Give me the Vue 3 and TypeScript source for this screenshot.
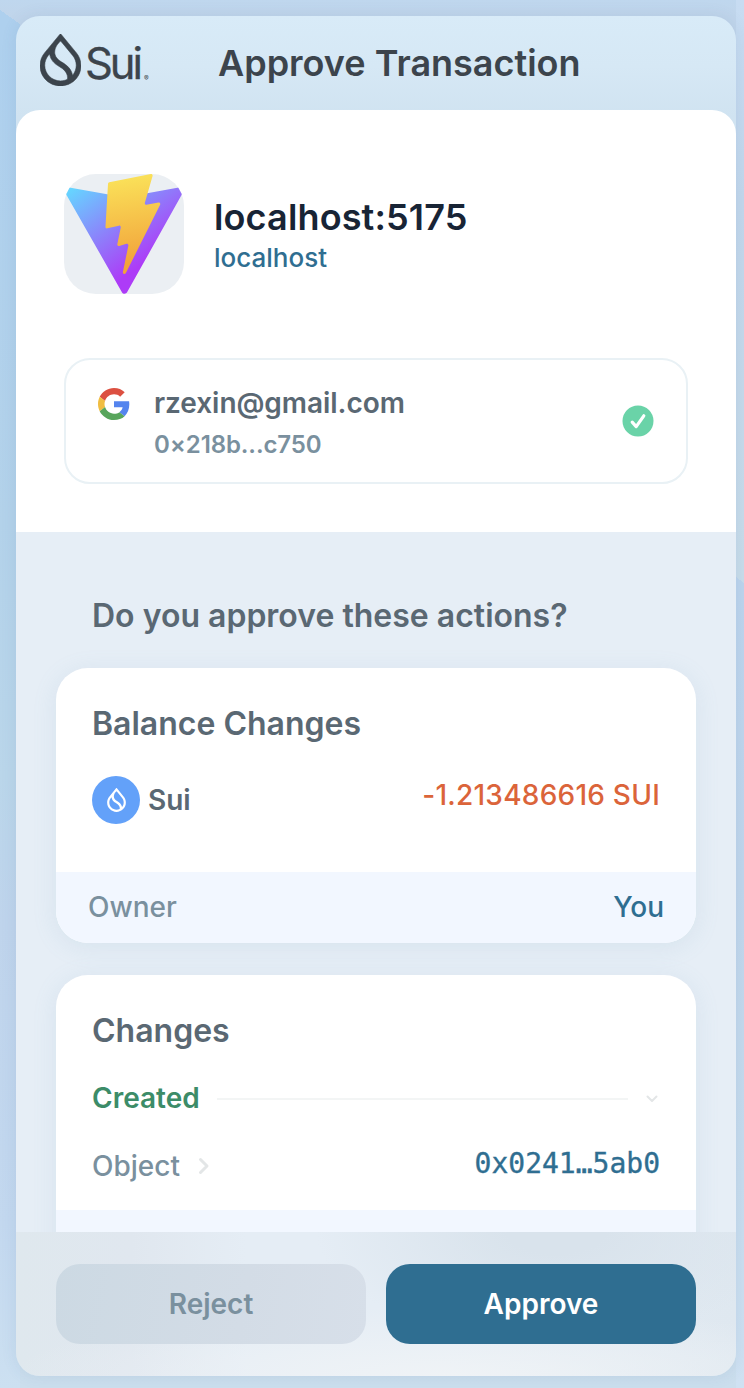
<script setup lang="ts">
const dropPath =
  'M240.057 159.914C255.698 179.553 265.052 204.39 265.052 231.407C265.052 258.424 255.414 284.019 239.362 303.768L237.971 305.475L237.608 303.31C237.292 301.477 236.929 299.613 236.502 297.749C228.46 262.421 202.265 232.134 159.148 207.597C130.029 191.071 113.361 171.195 108.985 148.586C106.157 133.972 108.258 119.294 112.318 106.717C116.379 94.1569 122.414 83.6187 127.549 77.2831L144.328 56.7754C147.267 53.1731 152.781 53.1731 155.719 56.7754L240.073 159.914H240.057ZM266.584 139.422L154.155 1.96703C152.007 -0.655678 147.993 -0.655678 145.845 1.96703L33.4316 139.422L33.0683 139.881C12.3868 165.555 0 198.181 0 233.698C0 316.408 67.1635 383.461 150 383.461C232.837 383.461 300 316.408 300 233.698C300 198.181 287.613 165.555 266.932 139.896L266.568 139.438L266.584 139.422ZM60.3381 159.472L70.3866 147.164L70.6868 149.439C70.9237 151.24 71.2239 153.041 71.5715 154.858C78.0809 189.001 101.322 217.456 140.173 239.496C173.952 258.724 193.622 280.828 199.278 305.064C201.648 315.176 202.059 325.129 201.032 333.835L200.969 334.372L200.479 334.609C185.233 342.05 168.09 346.237 149.984 346.237C86.4546 346.237 34.9484 294.826 34.9484 231.391C34.9484 204.153 44.4439 179.142 60.3065 159.44L60.3381 159.472Z'

interface Site { title: string; host: string }
interface Account { email: string; address: string }

const site: Site = { title: 'localhost:5175', host: 'localhost' }
const account: Account = { email: 'rzexin@gmail.com', address: '0×218b...c750' }
</script>

<template>
  <main class="screen">
    <div class="wallet">
      <header class="topbar">
        <div class="brand">
          <svg class="brand-drop" viewBox="0 0 300 384" preserveAspectRatio="none"><path :d="dropPath" fill="currentColor" stroke="currentColor" stroke-width="4" fill-rule="evenodd" /></svg>
          <span class="brand-name">Sui</span>
          <span class="brand-mark">®</span>
        </div>
        <h1 class="title">Approve Transaction</h1>
      </header>

      <section class="origin">
        <div class="site">
          <div class="favicon">
            <svg viewBox="0 0 256 257" width="120" height="120">
              <defs>
                <linearGradient id="tri" x1="-.828%" x2="57.636%" y1="7.652%" y2="78.411%">
                  <stop offset="0%" stop-color="#66d4ff" />
                  <stop offset="100%" stop-color="#ad3bf7" />
                </linearGradient>
                <linearGradient id="bolt" x1="43.376%" x2="50.316%" y1="2.242%" y2="89.03%">
                  <stop offset="0%" stop-color="#fae159" />
                  <stop offset="100%" stop-color="#f2a33b" />
                </linearGradient>
              </defs>
              <path fill="url(#tri)" d="M255.153 37.938L134.897 252.976c-2.483 4.44-8.862 4.466-11.382.048L.875 37.958c-2.746-4.814 1.371-10.646 6.827-9.67l120.385 21.517a6.537 6.537 0 0 0 2.322-.004l117.867-21.483c5.438-.991 9.574 4.796 6.877 9.62Z" />
              <path fill="url(#bolt)" d="M185.432.063L96.44 17.501a3.268 3.268 0 0 0-2.634 3.014l-5.474 92.456a3.268 3.268 0 0 0 3.997 3.378l24.777-5.718c2.318-.535 4.413 1.507 3.936 3.838l-7.361 36.047c-.495 2.426 1.782 4.5 4.151 3.78l15.304-4.649c2.372-.72 4.652 1.36 4.15 3.788l-11.698 56.621c-.732 3.542 3.979 5.473 5.943 2.437l1.313-2.028l72.516-144.72c1.215-2.423-.88-5.186-3.54-4.672l-25.505 4.922c-2.396.462-4.435-1.77-3.759-4.114l16.646-57.705c.677-2.35-1.37-4.583-3.769-4.113Z" />
            </svg>
          </div>
          <div class="site-text">
            <div class="site-title">{{ site.title }}</div>
            <div class="site-host">{{ site.host }}</div>
          </div>
        </div>

        <div class="account">
          <svg class="google" viewBox="0 0 48 48">
            <path fill="#dc5041" d="M24 9.5c3.54 0 6.71 1.22 9.21 3.6l6.85-6.85C35.9 2.38 30.47 0 24 0 14.62 0 6.51 5.38 2.56 13.22l7.98 6.19C12.43 13.72 17.74 9.5 24 9.5z" />
            <path fill="#5484ee" d="M46.98 24.55c0-1.57-.15-3.09-.38-4.55H24v9.02h12.94c-.58 2.96-2.26 5.48-4.78 7.18l7.73 6c4.51-4.18 7.09-10.36 7.09-17.65z" />
            <path fill="#f0bd42" d="M10.53 28.59c-.48-1.45-.76-2.99-.76-4.59s.27-3.14.76-4.59l-7.98-6.19C.92 16.46 0 20.12 0 24c0 3.88.92 7.54 2.56 10.78l7.97-6.19z" />
            <path fill="#58a55c" d="M24 48c6.48 0 11.93-2.13 15.89-5.81l-7.73-6c-2.15 1.45-4.92 2.3-8.16 2.3-6.26 0-11.57-4.22-13.47-9.91l-7.98 6.19C6.51 42.62 14.62 48 24 48z" />
          </svg>
          <div class="account-text">
            <div class="email">{{ account.email }}</div>
            <div class="address">{{ account.address }}</div>
          </div>
          <svg class="check" viewBox="0 0 32 32">
            <circle cx="16" cy="16" r="15.5" fill="#6ad3a8" />
            <path d="M10.2 17.2 14.2 21.6 21.8 10.8" fill="none" stroke="#fff" stroke-width="3.2" stroke-linecap="round" stroke-linejoin="round" />
          </svg>
        </div>
      </section>

      <section class="actions">
        <h2 class="question">Do you approve these actions?</h2>

        <article class="card balance">
          <div class="card-main">
            <h3 class="card-title">Balance Changes</h3>
            <div class="coin-row">
              <div class="coin">
                <span class="coin-icon">
                  <svg viewBox="0 0 300 384"><path :d="dropPath" fill="#fff" fill-rule="evenodd" /></svg>
                </span>
                <span class="coin-name">Sui</span>
              </div>
              <span class="amount">-1.213486616 SUI</span>
            </div>
          </div>
          <div class="owner-row">
            <span class="owner-label">Owner</span>
            <span class="owner-value">You</span>
          </div>
        </article>

        <article class="card changes">
          <div class="card-main">
            <h3 class="card-title">Changes</h3>
            <div class="created-row">
              <span class="created">Created</span>
              <span class="rule"></span>
              <svg class="chevron-down" viewBox="0 0 12 8"><path d="M1.5 1.5 6 6 10.5 1.5" /></svg>
            </div>
            <div class="object-row">
              <span class="object-label">Object</span>
              <svg class="chevron-right" viewBox="0 0 12 18"><path d="M2.5 2.5 9 9 2.5 15.5" /></svg>
              <span class="object-id">0x0241…5ab0</span>
            </div>
          </div>
          <div class="owner-row"></div>
        </article>
      </section>

      <footer class="footer">
        <button class="btn reject" type="button">Reject</button>
        <button class="btn approve" type="button">Approve</button>
      </footer>
    </div>
  </main>
</template>

<style>
body {
  margin: 0;
}
</style>

<style scoped>
* {
  box-sizing: border-box;
}
.screen {
  width: 744px;
  height: 1388px;
  padding: 16px 8px 12px 16px;
  font-family: Inter, "Liberation Sans", sans-serif;
  background:
    linear-gradient(to bottom left, transparent 50%, #aed0ee 50%) 0 10px / 20px 14px no-repeat,
    linear-gradient(180deg, #aed0ee 0, #b3d2ea 500px, #bad6ea 750px, #bfd4ec 900px, #c3d8ef 1200px, #cce0f1 1364px) 0 24px / 20px 1364px no-repeat,
    linear-gradient(to bottom left, transparent 50%, #bcd4ed 50%) 736px 577px / 8px 6px no-repeat,
    linear-gradient(180deg, #bcd4ed 0, #c0d6ec 300px, #c7dcee 600px, #cfe1f2 805px) 736px 583px / 8px 805px no-repeat,
    linear-gradient(180deg, #c7dcf2 0, #c2d7ec 200px, #c8dcea 583px) 736px 0 / 8px 583px no-repeat,
    linear-gradient(180deg, #bfd7ee 0, #c0d5eb 16px, #c0d5eb 50%, #cbdeed 100%);
}
.wallet {
  display: flex;
  flex-direction: column;
  height: 1360px;
  border-radius: 24px;
  overflow: hidden;
  background: linear-gradient(180deg, #d8ebf8 0, #d6e8f5 50px, #d0e3f1 100px, #d0e3f1 130px);
  box-shadow: 0 0 16px rgba(60, 100, 150, 0.1);
}
.topbar {
  display: flex;
  height: 94px;
  flex: none;
  color: #3c444c;
}
.brand {
  display: flex;
  width: 202px;
  padding: 18px 0 0 24px;
}
.brand-drop {
  width: 41px;
  height: 52px;
}
.brand-name {
  margin: 3px 0 0 4px;
  font-size: 43.5px;
  line-height: 52px;
  font-weight: 400;
  letter-spacing: -3.1px;
  -webkit-text-stroke: 0.3px currentColor;
}
.brand-mark {
  margin: 40px 0 0 4px;
  font-size: 7px;
  line-height: 10px;
  font-weight: 500;
}
.title {
  margin: 0;
  padding-top: 25px;
  font-size: 36px;
  line-height: 44px;
  font-weight: 600;
  white-space: nowrap;
}
.origin {
  flex: none;
  height: 422px;
  padding: 64px 48px 0;
  border-radius: 24px 24px 0 0;
  background: #fff;
}
.site {
  display: flex;
}
.favicon {
  width: 120px;
  height: 120px;
  border-radius: 32px;
  overflow: hidden;
  background: #ebeff3;
}
.favicon svg {
  display: block;
}
.site-text {
  padding: 23px 0 0 30px;
}
.site-title {
  color: #182435;
  font-size: 36px;
  line-height: 40px;
  font-weight: 600;
  letter-spacing: 0.14px;
}
.site-host {
  margin-top: 5px;
  color: #2f6e91;
  font-size: 26px;
  line-height: 32px;
  font-weight: 500;
}
.account {
  display: flex;
  height: 126px;
  margin-top: 64px;
  padding: 28px 32px 0;
  border: 2px solid #e9f1f5;
  border-radius: 26px;
}
.google {
  width: 32px;
  height: 32px;
}
.account-text {
  flex: 1;
  margin-left: 24px;
}
.email {
  margin-top: -2px;
  color: #5a6873;
  font-size: 28px;
  line-height: 34px;
  font-weight: 600;
  letter-spacing: -0.06px;
}
.address {
  margin-top: 9px;
  color: #7a909e;
  font-size: 24px;
  line-height: 32px;
  font-weight: 600;
  letter-spacing: -0.1px;
}
.check {
  width: 32px;
  height: 32px;
  margin-top: 17px;
}
.actions {
  flex: 1;
  min-height: 0;
  overflow: hidden;
  padding: 63px 40px 0;
  background: #e6eef6;
}
.question {
  margin: 0 0 31px 36px;
  color: #5a6873;
  font-size: 32px;
  line-height: 42px;
  font-weight: 600;
}
.card {
  border-radius: 32px;
  overflow: hidden;
  background: #fff;
  box-shadow: 0 4px 24px rgba(120, 160, 190, 0.14);
}
.balance {
  height: 275px;
  margin-bottom: 32px;
}
.card-main {
  height: 204px;
  padding: 35px 36px 0;
}
.changes .card-main {
  height: 235px;
}
.card-title {
  margin: 0;
  color: #5a6873;
  font-size: 32px;
  line-height: 42px;
  font-weight: 600;
}
.coin-row {
  display: flex;
  justify-content: space-between;
  margin-top: 31px;
}
.coin {
  display: flex;
  align-items: center;
  gap: 8px;
  height: 48px;
}
.coin-icon {
  display: flex;
  align-items: center;
  justify-content: center;
  width: 48px;
  height: 48px;
  border-radius: 50%;
  background: #63a1f9;
}
.coin-icon svg {
  width: 19px;
  height: 24px;
}
.coin-name {
  color: #5a6873;
  font-size: 28px;
  font-weight: 600;
}
.amount {
  margin-top: 2px;
  color: #db643a;
  font-size: 28px;
  line-height: 34px;
  font-weight: 500;
  letter-spacing: 0.24px;
}
.owner-row {
  display: flex;
  justify-content: space-between;
  height: 71px;
  padding: 18px 32px 0;
  background: #f2f7ff;
  font-size: 28px;
  line-height: 34px;
  font-weight: 500;
}
.owner-label {
  color: #7a909e;
}
.owner-value {
  color: #2f6e91;
}
.created-row {
  display: flex;
  align-items: center;
  height: 36px;
  margin-top: 28px;
}
.created {
  color: #3c8c68;
  font-size: 28px;
  line-height: 34px;
  font-weight: 600;
}
.rule {
  flex: 1;
  height: 2px;
  margin: 2px 18px 0 17px;
  background: #f3f5f5;
}
.chevron-down {
  width: 12px;
  height: 8px;
  margin: 2px 2px 0 0;
}
.chevron-down path,
.chevron-right path {
  fill: none;
  stroke: #e3e6e7;
  stroke-width: 2;
  stroke-linecap: round;
  stroke-linejoin: round;
}
.chevron-right path {
  stroke-width: 3;
}
.object-row {
  display: flex;
  align-items: center;
  height: 34px;
  margin-top: 33px;
}
.object-label {
  color: #7a909e;
  font-size: 28px;
  line-height: 34px;
  font-weight: 500;
}
.chevron-right {
  width: 12px;
  height: 18px;
  margin-left: 18px;
}
.object-id {
  margin: -5px 0 0 auto;
  color: #2f6e91;
  font-family: "DejaVu Sans Mono", "Liberation Mono", monospace;
  font-size: 28px;
  line-height: 34px;
  -webkit-text-stroke: 0.35px currentColor;
}
.footer {
  flex: none;
  display: flex;
  gap: 20px;
  height: 144px;
  padding: 32px 40px;
  background:
    radial-gradient(ellipse 440px 70px at 60% 100%, #eff3f6 0%, rgba(239, 243, 246, 0) 100%),
    radial-gradient(ellipse 240px 110px at 75% 0%, #d9e3ec 20%, rgba(217, 227, 236, 0) 100%),
    linear-gradient(90deg, #dfe8ee 0%, #e0e7ef 16%, #e5edf5 32%, #e5edf5 60%, #dfe8f0 100%);
}
.btn {
  width: 310px;
  height: 80px;
  padding: 0;
  border: 0;
  border-radius: 24px;
  font-family: inherit;
  font-size: 28px;
  line-height: 34px;
  font-weight: 600;
}
.reject {
  background: linear-gradient(100deg, #ccd9e3, #d3dce6 60%, #d7dfe9);
  color: #7a909e;
}
.approve {
  background: #2f6e91;
  color: #fff;
}
</style>
